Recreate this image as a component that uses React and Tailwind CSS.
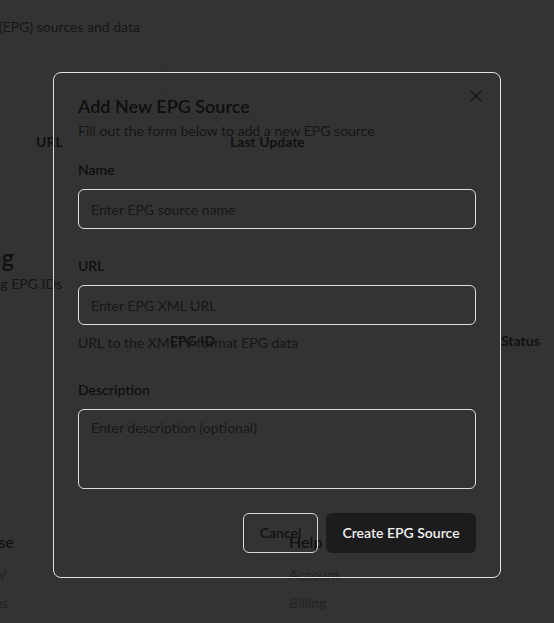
import React from 'react';
import { X } from 'lucide-react';

// text that runs off the left edge of the window: right-aligned and clipped
const Clip = ({ className, children }) => (
  <div className={`flex justify-end overflow-hidden whitespace-nowrap ${className}`}>
    <span className="shrink-0">{children}</span>
  </div>
);

const App = () => {
  return (
    <div className="relative h-[623px] w-[554px] overflow-hidden bg-[#333333] font-['Lato',sans-serif] text-[#111111]">
      {/* page behind the dialog */}
      <div className="pt-[17px]">
        <p className="-ml-[1px] whitespace-nowrap text-sm leading-5 text-[#161616]">(EPG) sources and data</p>

        <div className="mt-6 -ml-4 h-10 w-[183px] rounded-lg border border-[#2f2f2f]" />

        <div className="mt-4 border-t border-[#2f2f2f]">
          <div className="flex h-12 items-center text-sm font-bold">
            <span className="w-[230px] pl-[36px]">URL</span>
            <span>Last Update</span>
          </div>
        </div>

        <div className="mt-[76px]">
          <Clip className="w-[14px] text-2xl font-semibold leading-8">EPG Mapping</Clip>
          <Clip className="w-[62px] text-sm leading-5 text-[#161616]">Map channels using EPG IDs</Clip>
        </div>

        <div className="mt-6 flex h-[47px] items-center border-b border-[#2f2f2f] text-sm font-bold">
          <span className="w-[170px]" />
          <span className="w-[331px]">EPG ID</span>
          <span>Status</span>
        </div>

        <div className="mt-[131px] flex border-t border-[#2f2f2f] pt-[33px]">
          <div className="w-[289px]">
            <Clip className="w-[14px] text-base font-semibold leading-6">Browse</Clip>
            <Clip className="mt-[11px] w-[7px] text-sm leading-5 text-[#242424]">Live TV</Clip>
            <Clip className="mt-2 w-[8px] text-sm leading-5 text-[#242424]">Series</Clip>
          </div>
          <div>
            <p className="text-base font-semibold leading-6">Help</p>
            <p className="mt-[11px] text-sm leading-5 text-[#242424]">Account</p>
            <p className="mt-2 text-sm leading-5 text-[#242424]">Billing</p>
          </div>
        </div>
      </div>

      {/* dialog */}
      <div className="absolute inset-0 flex justify-center pt-[72px]">
        <div className="relative h-fit w-[448px] rounded-lg border border-[#e2e2e2] p-6">
          <button className="absolute right-[14px] top-[13px] text-[#151515]">
            <X size={20} strokeWidth={1.5} />
          </button>

          <h2 className="text-lg font-semibold leading-[18px] text-[#0f0f0f]">Add New EPG Source</h2>
          <p className="mt-1.5 text-sm leading-5 text-[#161616]">Fill out the form below to add a new EPG source</p>

          <div className="mt-[19px]">
            <label className="block text-sm font-semibold leading-5 text-[#0f0f0f]">Name</label>
            <input
              autoFocus
              placeholder="Enter EPG source name"
              className="mt-[9px] h-10 w-full rounded-md border border-[#dcdcdc] bg-transparent px-3 text-sm text-[#111111] caret-[#111111] outline-none placeholder:text-[#171717]"
            />
          </div>

          <div className="mt-[27px]">
            <label className="block text-sm font-semibold leading-5 text-[#0f0f0f]">URL</label>
            <input
              placeholder="Enter EPG XML URL"
              className="mt-[9px] h-10 w-full rounded-md border border-[#dcdcdc] bg-transparent px-3 text-sm text-[#111111] outline-none placeholder:text-[#171717]"
            />
            <p className="mt-2 text-sm leading-5 text-[#161616]">URL to the XMLTV format EPG data</p>
          </div>

          <div className="mt-[27px]">
            <label className="block text-sm font-semibold leading-5 text-[#0f0f0f]">Description</label>
            <textarea
              placeholder="Enter description (optional)"
              className="mt-[9px] block h-20 w-full resize-none rounded-md border border-[#dcdcdc] bg-transparent px-3 py-2 text-sm leading-5 text-[#111111] outline-none placeholder:text-[#171717]"
            />
          </div>

          <div className="mt-6 flex justify-end gap-2">
            <button className="flex h-10 w-[75px] items-center justify-center rounded-md border border-[#d8d8d8] text-sm font-semibold text-[#111111]">
              Cancel
            </button>
            <button className="flex h-10 w-[150px] items-center justify-center rounded-md bg-[#1c1c1c] text-sm font-semibold text-[#f2f2f2]">
              Create EPG Source
            </button>
          </div>
        </div>
      </div>
    </div>
  );
};

export default App;
